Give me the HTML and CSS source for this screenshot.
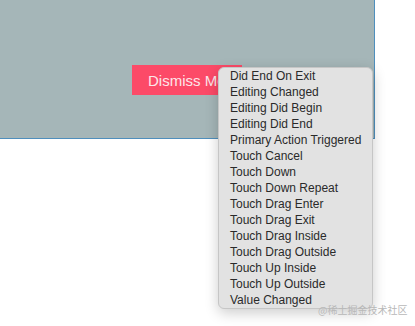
FILE: index.html
```html
<!DOCTYPE html>
<html>
<head>
<meta charset="utf-8">
<link rel="stylesheet" href="styles.css">
</head>
<body>
<div class="stage">
  <div class="panel">
    <button class="dismiss">Dismiss Me</button>
  </div>
  <ul class="menu">
    <li>Did End On Exit</li>
    <li>Editing Changed</li>
    <li>Editing Did Begin</li>
    <li>Editing Did End</li>
    <li>Primary Action Triggered</li>
    <li>Touch Cancel</li>
    <li>Touch Down</li>
    <li>Touch Down Repeat</li>
    <li>Touch Drag Enter</li>
    <li>Touch Drag Exit</li>
    <li>Touch Drag Inside</li>
    <li>Touch Drag Outside</li>
    <li>Touch Up Inside</li>
    <li>Touch Up Outside</li>
    <li>Value Changed</li>
  </ul>
  <div class="watermark">@稀土掘金技术社区</div>
</div>
</body>
</html>
```

FILE: styles.css
```css
html, body {
  margin: 0;
  padding: 0;
  background: #ffffff;
}
.stage {
  position: relative;
  width: 415px;
  height: 326px;
  overflow: hidden;
  font-family: "Liberation Sans", Arial, sans-serif;
}
.panel {
  width: 375px;
  height: 139px;
  background: #a5b6b8;
  border-right: 1px solid #4f8fbd;
  border-bottom: 1px solid #4f8fbd;
  box-sizing: border-box;
  padding: 65px 0 0 132px;
}
.dismiss {
  display: block;
  width: 110px;
  height: 30px;
  margin: 0;
  padding: 0 0 0 16px;
  border: none;
  background: #fc4a68;
  color: #fde6ea;
  font-family: "Liberation Sans", Arial, sans-serif;
  font-size: 15px;
  text-align: left;
}
.menu {
  position: absolute;
  left: 218px;
  top: 67px;
  width: 155px;
  margin: 0;
  padding: 0 0 0 11px;
  box-sizing: border-box;
  list-style: none;
  background: #e2e2e2;
  border: 1px solid #c6c6c6;
  border-radius: 6px;
  box-shadow: 0 4px 14px rgba(0,0,0,0.2);
  font-size: 12px;
  line-height: 16px;
  color: #2a2a2a;
}
.menu li {
  height: 16px;
  white-space: nowrap;
}
.watermark {
  position: absolute;
  left: 318px;
  top: 303px;
  font-family: "Noto Sans CJK SC", sans-serif;
  font-size: 10px;
  line-height: 14px;
  color: #b8b8b8;
  white-space: nowrap;
}
```
